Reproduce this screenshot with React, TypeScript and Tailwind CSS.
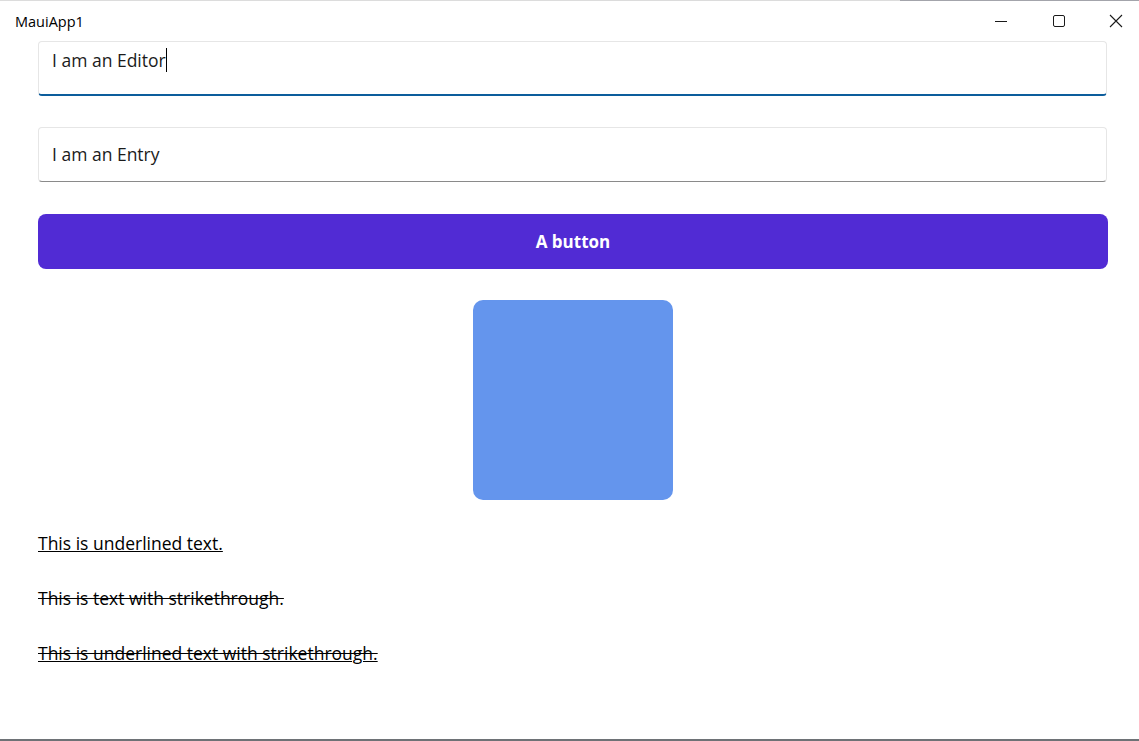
export default function App() {
  const labels = [
    { text: "This is underlined text.", cls: "underline" },
    { text: "This is text with strikethrough.", cls: "line-through" },
    { text: "This is underlined text with strikethrough.", cls: "[text-decoration-line:underline_line-through]" },
  ]

  return (
    <div className="w-[1139px] h-[741px] bg-white flex flex-col overflow-hidden" style={{ fontFamily: '"Open Sans", "Noto Sans", sans-serif' }}>
      {/* window frame top */}
      <div className="flex h-px">
        <div className="w-[900px] bg-[#dcdcdc]"></div>
        <div className="flex-1 bg-[#a3a4ab]"></div>
      </div>

      {/* title bar */}
      <div className="h-[40px] flex items-center justify-between">
        <span className="pl-[15px] pt-px text-[14.5px] text-black">MauiApp1</span>
        <div className="flex items-center h-full pr-[16px] gap-[44px]">
          <svg width="14" height="14" viewBox="0 0 14 14">
            <path d="M1 7.5h12" stroke="#1a1a1a" strokeWidth="1" />
          </svg>
          <div className="flex items-center gap-[43px]">
            <svg width="14" height="14" viewBox="0 0 14 14">
              <rect x="1.5" y="1.5" width="11" height="11" rx="1.5" fill="none" stroke="#1a1a1a" strokeWidth="1" />
            </svg>
            <svg width="14" height="14" viewBox="0 0 14 14">
              <path d="M1 1l12 12M13 1L1 13" stroke="#1a1a1a" strokeWidth="1.1" />
            </svg>
          </div>
        </div>
      </div>

      <div className="pl-[38px] pr-[31px] flex flex-col">
        {/* Editor */}
        <div className="h-[55px] mr-px border border-[#e6e6e6] border-b-2 border-b-[#0c5d9c] rounded-[4px] px-[13px] pt-[5px] text-[17.5px] text-[#1b1b1b] flex items-start">
          <span>I am an Editor</span>
          <span className="w-px h-[24px] bg-black mt-[1px]"></span>
        </div>

        {/* Entry */}
        <div className="mt-[31px] h-[55px] mr-px border border-[#e6e6e6] border-b-[#8a8a8a] rounded-[4px] px-[13px] text-[17.5px] text-[#1b1b1b] flex items-center">
          I am an Entry
        </div>

        {/* Button */}
        <div className="mt-[32px] h-[55px] bg-[#512bd4] rounded-[8px] flex items-center justify-center text-white text-[17px] font-bold">
          A button
        </div>

        {/* Box */}
        <div className="mt-[31px] flex justify-center">
          <div className="w-[200px] h-[200px] bg-[#6495ed] rounded-[10px]"></div>
        </div>

        {/* Labels */}
        <div className="mt-[31px] flex flex-col gap-[30px]">
          {labels.map((l, i) => (
            <div key={i} className={`text-[17.5px] leading-[25px] text-black decoration-1 ${l.cls}`}>
              {l.text}
            </div>
          ))}
        </div>
      </div>

      <div className="flex-1"></div>
      <div className="h-[2px] bg-[#6e7276]"></div>
    </div>
  )
}
